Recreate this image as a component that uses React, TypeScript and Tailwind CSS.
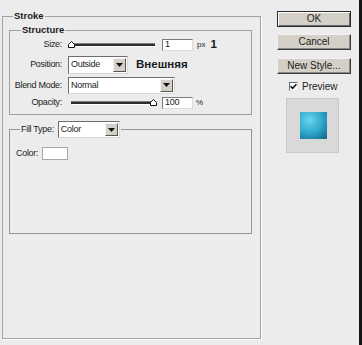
import React from "react";

function Slider({ thumb }: { thumb: "left" | "right" }) {
  return (
    <div className="relative h-[8px] w-[89px]">
      <div className="absolute left-[3px] right-[2px] top-[2px] h-[4px] border-t border-t-[#7c7c7c] border-b border-b-white bg-[#2e2e2e]" />
      <svg
        className={thumb === "left" ? "absolute left-0 top-0" : "absolute right-0 top-0"}
        width="7"
        height="7"
        viewBox="0 0 7 7"
      >
        <path d="M0.5 6.5 L0.5 3.5 L3.5 0.5 L6.5 3.5 L6.5 6.5 Z" fill="#fff" stroke="#111" strokeWidth="1" />
      </svg>
    </div>
  );
}

function TextBox({ value }: { value: string }) {
  return (
    <div className="flex h-[12px] w-[31px] items-center border border-t-[#7a7a7a] border-l-[#7a7a7a] border-b-[#dcdcdc] border-r-[#dcdcdc] bg-white pl-[2px] text-[9px] leading-none tracking-[-0.3px]">
      {value}
    </div>
  );
}

function Select({ value, w, h }: { value: string; w: string; h: string }) {
  return (
    <div className={`flex items-stretch border border-t-[#6e6e6e] border-l-[#6e6e6e] border-b-[#d8d8d8] border-r-[#d8d8d8] bg-white ${w} ${h}`}>
      <div className="flex flex-1 items-center pl-[2px] text-[9px] leading-none tracking-[-0.3px]">{value}</div>
      <div className="my-[1px] mr-[1px] flex w-[13px] items-center justify-center border border-t-[#f4f4f4] border-l-[#f4f4f4] border-b-[#555] border-r-[#555] bg-[#d4d0c8]">
        <svg width="7" height="4" viewBox="0 0 7 4">
          <path d="M0 0 L7 0 L3.5 4 Z" fill="#111" />
        </svg>
      </div>
    </div>
  );
}

function Label({ children }: { children: React.ReactNode }) {
  return <div className="w-[52px] shrink-0 text-right text-[9px] leading-none tracking-[-0.3px]">{children}</div>;
}

function Button({ children, primary }: { children: React.ReactNode; primary?: boolean }) {
  return (
    <div
      className={
        primary
          ? "flex h-[16px] w-[74px] items-center justify-center border border-[#2a2a2a] bg-[#d4d0c8] text-[10px] leading-none shadow-[inset_1px_1px_0_#fff,inset_-1px_-1px_0_#6a6a6a]"
          : "flex h-[16px] w-[74px] items-center justify-center border border-t-[#f2f2f2] border-l-[#f2f2f2] border-b-[#3c3c3c] border-r-[#3c3c3c] bg-[#d4d0c8] text-[10px] leading-none shadow-[inset_-1px_-1px_0_#8a8a8a]"
      }
    >
      {children}
    </div>
  );
}

export default function App() {
  return (
    <div className="flex h-[345px] w-[362px] overflow-hidden bg-[#ececec] font-['Liberation_Sans',Arial,sans-serif] text-[#1c1c1c]">
      <div className="pl-[2px] pt-[10px]">
        <fieldset className="h-[329px] w-[259px] border border-[#a2a2a2] shadow-[1px_1px_0_#fff]">
          <legend className="ml-[10px] px-[1px] text-[9.5px] font-bold leading-[12px]">Stroke</legend>

          <fieldset className="ml-[6px] mt-[2px] w-[243px] border border-[#a0a0a0] pb-[3px]">
            <legend className="ml-[11px] px-[1px] text-[9.5px] font-bold leading-[12px]">Structure</legend>

            <div className="flex h-[17px] items-center">
              <Label>Size:</Label>
              <div className="ml-[6px]">
                <Slider thumb="left" />
              </div>
              <div className="ml-[5px]">
                <TextBox value="1" />
              </div>
              <span className="ml-[4px] text-[8px] leading-none">px</span>
              <span className="ml-[5px] text-[11.5px] font-bold leading-none">1</span>
            </div>

            <div className="flex h-[23px] items-center">
              <Label>Position:</Label>
              <div className="ml-[6px]">
                <Select value="Outside" w="w-[60px]" h="h-[18px]" />
              </div>
              <span className="ml-[8px] text-[11.5px] font-bold leading-none">Внешняя</span>
            </div>

            <div className="flex h-[18px] items-center">
              <Label>Blend Mode:</Label>
              <div className="ml-[6px]">
                <Select value="Normal" w="w-[107px]" h="h-[17px]" />
              </div>
            </div>

            <div className="flex h-[17px] items-center">
              <Label>Opacity:</Label>
              <div className="ml-[6px]">
                <Slider thumb="right" />
              </div>
              <div className="ml-[5px]">
                <TextBox value="100" />
              </div>
              <span className="ml-[3px] text-[8px] leading-none">%</span>
            </div>
          </fieldset>

          <fieldset className="ml-[6px] mt-[6px] h-[113px] w-[243px] border border-[#959595]">
            <legend className="ml-[10px] flex items-center px-[1px]">
              <span className="text-[9px] leading-none tracking-[-0.3px]">Fill Type:</span>
              <div className="ml-[4px]">
                <Select value="Color" w="w-[62px]" h="h-[17px]" />
              </div>
            </legend>
            <div className="ml-[6px] mt-[9px] flex items-center">
              <span className="text-[9px] leading-none tracking-[-0.3px]">Color:</span>
              <div className="ml-[4px] h-[13px] w-[26px] border border-[#a8a8a8] bg-white" />
            </div>
          </fieldset>
        </fieldset>
      </div>

      <div className="ml-[16px] flex w-[74px] flex-col pt-[11px]">
        <Button primary>OK</Button>
        <div className="mt-[7px]">
          <Button>Cancel</Button>
        </div>
        <div className="mt-[8px]">
          <Button>New Style...</Button>
        </div>
        <div className="mt-[8px] flex h-[9px] items-center pl-[12px]">
          <div className="flex h-[9px] w-[9px] items-center justify-center border border-t-[#6a6a6a] border-l-[#6a6a6a] border-b-[#e8e8e8] border-r-[#e8e8e8] bg-white">
            <svg width="7" height="7" viewBox="0 0 7 7">
              <path d="M0.5 3.2 L2.6 5.4 L6.5 1.2" fill="none" stroke="#111" strokeWidth="1.6" />
            </svg>
          </div>
          <span className="ml-[4px] text-[10px] leading-none">Preview</span>
        </div>
        <div className="ml-[9px] mt-[7px] flex h-[55px] w-[53px] items-center justify-center border border-[#c9c9c9] bg-[#d9d9d9]">
          <div className="ml-[2px] h-[27px] w-[27px] bg-[radial-gradient(circle_at_35%_30%,#6ad8f0,#2ea8cc_50%,#17698a_95%)]" />
        </div>
      </div>

      <div className="flex-1" />
      <div className="w-[3px] bg-[#141414]" />
    </div>
  );
}
